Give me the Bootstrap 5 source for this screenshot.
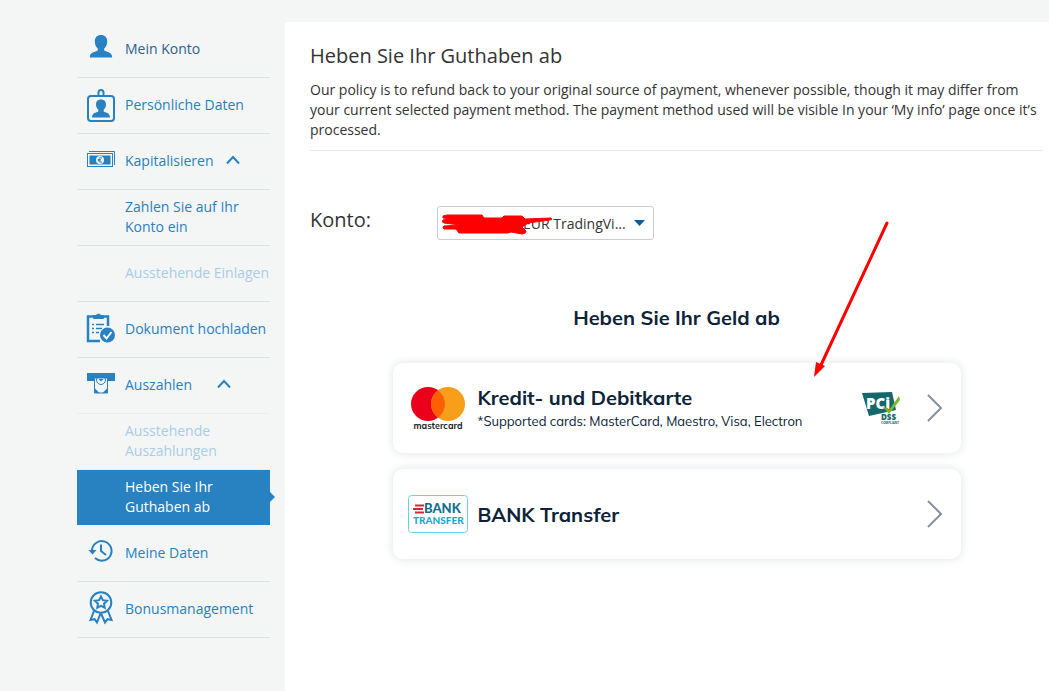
<!DOCTYPE html>
<html lang="de">
<head>
<meta charset="utf-8">
<meta name="viewport" content="width=device-width, initial-scale=1">
<title>Heben Sie Ihr Guthaben ab</title>
<link href="https://cdn.jsdelivr.net/npm/bootstrap@5.3.0/dist/css/bootstrap.min.css" rel="stylesheet">
<style>
  body { background: #f4f6f6; color: #333; font-family: "Open Sans", "Noto Sans", sans-serif; font-size: 14px; line-height: 20px; }
  .page { padding-top: 22px; }
  .side { width: 193px; margin-left: 77px; margin-right: 15px; }
  .side-link { height: 56px; border-bottom: 1px solid #dce3e3; color: #2881c1; text-decoration: none; padding-bottom: 2px; }
  .side-link svg { flex: none; width: 48px; height: 36px; margin-bottom: 2px; fill: #2881c1; }
  .side-link.top-item { color: #2f5f8c; }
  .side-link.sub-item { padding-left: 48px; }
  .side-link.muted-item { color: #a9cce6; }
  .side-link.faint-line { border-color: #e9eeee; }
  .side-link.current { background: #2881c1; background-clip: padding-box; color: #fff; border-color: #f4f6f6; position: relative; }
  .side-link.current::after { content: ""; position: absolute; left: 100%; top: 22px; border: 5px solid transparent; border-left-color: #2881c1; border-right: 0; }
  .side-link svg.caret-up { width: 14px; height: 10px; fill: none; stroke: #2881c1; stroke-width: 2; }
  .caret-near { margin-left: 12px; }
  .caret-far { margin-left: 25px; }
  .panel { padding: 24px 6px 24px 25px; }
  h1 { font-size: 20px; line-height: 20px; font-weight: 400; margin-bottom: 14px; }
  .intro { padding-bottom: 10px; border-bottom: 1px solid #eaeaea; margin-bottom: 55px; }
  .konto-label { font-size: 20px; line-height: 24px; width: 127px; padding-bottom: 6px; }
  .konto-box { position: relative; width: 217px; }
  .konto-select { width: 100%; height: 34px; border: 1px solid #ccc; border-radius: 3px; color: #333; background: #fff; padding: 2px 20px 0 85px; appearance: none; }
  .konto-box svg { position: absolute; left: 0; top: 0; pointer-events: none; }
  .methods { max-width: 568px; color: #0c2338; font-family: Mulish, Muli, "Open Sans", sans-serif; }
  .methods-title, .method-name { font-size: 20px; line-height: 24px; font-weight: 700; }
  .methods-title { margin: 66px 0 33px; }
  .method { height: 90px; border: 0; border-radius: 10px; background: #fff; box-shadow: 0 0 10px rgba(30,50,70,.14); padding: 0 18px 0 15px; color: inherit; }
  .method-logo { flex: none; width: 60px; }
  .method-text { padding: 2px 0 0 10px; }
  .method-note { font-size: 13px; line-height: 22px; }
  .pointer-arrow { position: absolute; right: 70px; top: -144px; pointer-events: none; }
</style>
</head>
<body>
<div class="page d-flex min-vh-100 flex-nowrap">
  <nav class="side flex-shrink-0" aria-label="Konto">
    <a href="#" class="side-link top-item d-flex align-items-center">
      <svg viewBox="0 0 48 36"><path d="M24 5c4 0 6.200 2.700 6.200 6.400 0 3.300-1.300 5.400-3 7v2.200c2.600 1.600 8 1.500 8 6.900H12.800c0-5.400 5.400-5.300 8-6.900v-2.200c-1.700-1.600-3-3.700-3-7C17.800 7.700 20 5 24 5z"/></svg>
      <span>Mein Konto</span></a>
    <a href="#" class="side-link d-flex align-items-center">
      <svg viewBox="0 0 48 36"><rect x="11" y="10" width="26" height="25" rx="3" fill="none" stroke="#2881c1" stroke-width="2"/><path d="M21.500 10V6.500a2.500 2.500 0 0 1 5 0V10" fill="none" stroke="#2881c1" stroke-width="2"/><path d="M24 13.500c3.500 0 5 2.200 5 5 0 2.400-1 4-2.300 5v2c2 1.300 6.300 1 6.300 6H15c0-5 4.300-4.700 6.300-6v-2c-1.300-1-2.300-2.600-2.300-5 0-2.800 1.500-5 5-5z"/></svg>
      <span>Persönliche Daten</span></a>
    <a href="#" class="side-link d-flex align-items-center" aria-expanded="true">
      <svg viewBox="0 0 48 36"><path d="M12 9.500h25.500V23" fill="none" stroke="#2881c1"/><rect x="10.500" y="11.500" width="25" height="13" fill="none" stroke="#2881c1"/><path d="M12.500 13.500h21v9h-21z"/><circle cx="23" cy="18" r="4" fill="#f4f6f6"/><path d="M25 16a2.300 2.300 0 1 0 0 4M20.800 17.500h3M20.800 18.800h3" fill="none" stroke="#2881c1"/></svg>
      <span>Kapitalisieren</span>
      <svg class="caret-up caret-near" viewBox="0 0 14 10"><path d="M1 8.500 7 2l6 6.500"/></svg></a>
    <a href="#" class="side-link sub-item d-flex align-items-center"><span>Zahlen Sie auf Ihr Konto ein</span></a>
    <a href="#" class="side-link sub-item muted-item d-flex align-items-center"><span class="text-nowrap">Ausstehende Einlagen</span></a>
    <a href="#" class="side-link d-flex align-items-center">
      <svg viewBox="0 0 48 36"><path d="M23 31H11V6.500h20V16" fill="none" stroke="#2881c1" stroke-width="2.500"/><path d="M16.500 8.500V5.500h2.500C19.500 3.700 23.500 3.700 24 5.500h2.500v3z" stroke="#2881c1"/><path d="M15 14.500h2m2 0h8M15 18.500h2m2 0h6M15 22.500h2m2 0h3" stroke="#2881c1" stroke-width="1.500"/><circle cx="30.500" cy="25" r="7.500"/><path d="m26.500 25 3 3.500 5-6.500" fill="none" stroke="#f4f6f6" stroke-width="2"/></svg>
      <span class="text-nowrap">Dokument hochladen</span></a>
    <a href="#" class="side-link faint-line d-flex align-items-center" aria-expanded="true">
      <svg viewBox="0 0 48 36"><path d="M10 7h28v8H10z"/><path d="M17.500 12h13v15h-13z" fill="#f4f6f6" stroke="#2881c1"/><circle cx="24" cy="14" r="4.500" fill="none" stroke="#2881c1"/><path d="m21.500 13 2.500 2.500 2.500-2.500M17.500 22l5 5h-5zm13 0-5 5h5z" fill="#2881c1"/></svg>
      <span>Auszahlen</span>
      <svg class="caret-up caret-far" viewBox="0 0 14 10"><path d="M1 8.500 7 2l6 6.500"/></svg></a>
    <a href="#" class="side-link sub-item muted-item faint-line d-flex align-items-center"><span>Ausstehende Auszahlungen</span></a>
    <a href="#" class="side-link sub-item current d-flex align-items-center" aria-current="page"><span>Heben Sie Ihr<br>Guthaben ab</span></a>
    <a href="#" class="side-link d-flex align-items-center">
      <svg viewBox="0 0 48 36"><path d="M15 16A9.800 9.800 0 1 1 18 24M24 10.500V17l5 4" fill="none" stroke="#2881c1" stroke-width="2"/><path d="M11.500 16h8l-4 4.500z"/></svg>
      <span>Meine Daten</span></a>
    <a href="#" class="side-link d-flex align-items-center">
      <svg viewBox="0 0 48 36"><g fill="none" stroke="#2881c1" stroke-width="2"><circle cx="24" cy="12.500" r="10.300"/><path d="m24 6.500 1.900 3.700 4.100.6-3 2.900.7 4.100-3.700-1.900-3.700 1.900.7-4.100-3-2.900 4.100-.6z"/><path d="m17 21-3.500 9 4-.8 2.500 3.300 3.500-9M31 21l3.500 9-4-.8-2.500 3.300-4-9"/></g></svg>
      <span>Bonusmanagement</span></a>
  </nav>

  <main class="panel bg-white flex-grow-1">
    <h1>Heben Sie Ihr Guthaben ab</h1>
    <p class="intro">Our policy is to refund back to your original source of payment, whenever possible, though it may differ from your current selected payment method. The payment method used will be visible In your ‘My info’ page once it’s processed.</p>
    <div class="d-flex align-items-center">
      <label class="konto-label" for="konto">Konto:</label>
      <div class="konto-box">
        <select id="konto" class="konto-select"><option>EUR TradingVi...</option></select>
        <svg width="217" height="34" viewBox="0 0 217 34"><path d="M197 14h11l-5.500 6z" fill="#0b5c9c"/><path d="M6 10 10 9h35l2 3h18l2-2h18l3 3 26-1q2 2-1 2l-22 3-6 4 4 4q1 2-4 3l-11-2-3 1H22l-3-4H7q-2-2 0-3l16-1-16-2q-3-1-1-3l7-1-7-1z" fill="red" stroke="red" stroke-linejoin="round"/></svg>
      </div>
    </div>

    <section class="methods mx-auto">
      <h2 class="methods-title text-center">Heben Sie Ihr Geld ab</h2>
      <div class="position-relative d-grid gap-3">
        <button type="button" class="method d-flex align-items-center text-start w-100">
          <svg class="method-logo" height="48" viewBox="0 0 60 48"><circle cx="20" cy="20" r="17" fill="#eb001b"/><circle cx="40" cy="20" r="17" fill="#f79e1b"/><path d="M30 6.300a17 17 0 0 1 0 27.400 17 17 0 0 1 0-27.400z" fill="#ff5f00"/><text x="30" y="45" text-anchor="middle" font-family="Mulish, Lato" font-weight="700" font-size="9" fill="#222">mastercard</text></svg>
          <span class="method-text flex-grow-1">
            <span class="method-name d-block">Kredit- und Debitkarte</span>
            <span class="method-note d-block">*Supported cards: MasterCard, Maestro, Visa, Electron</span>
          </span>
          <svg width="40" height="34" viewBox="0 0 40 34" role="img" aria-label="PCI DSS Compliant"><path d="M0 2 30 1l4 18L7 25z" fill="#14676b"/><text x="4" y="18" font-family="Open Sans" font-weight="800" font-size="15" fill="#fff">PCi</text><path d="m21 16 5 1 1 2L37 5l1 4-11 14z" fill="#76b82a"/><text x="19" y="29" font-family="Open Sans" font-weight="800" font-size="8" fill="#14676b">DSS</text><text x="19" y="33" font-family="Open Sans" font-weight="700" font-size="3" fill="#14676b">COMPLIANT</text></svg>
          <svg class="ms-4" width="17" height="30" viewBox="0 0 17 30"><path d="m2 2 13 13L2 28" fill="none" stroke="#86919c" stroke-width="2"/></svg>
        </button>
        <button type="button" class="method d-flex align-items-center text-start w-100">
          <svg class="method-logo" height="38" viewBox="0 0 60 38"><rect x=".5" y=".5" width="59" height="37" rx="3" fill="#fff" stroke="#6dcfe6"/><path d="M7 10.500h9M5 14h10M7 17.500h9" stroke="#d9262e" stroke-width="2"/><text x="16" y="18" font-family="Lato" font-weight="900" font-size="13" fill="#12708f">BANK</text><text x="5" y="29" font-family="Lato" font-weight="900" font-size="10" fill="#16a9d4">TRANSFER</text></svg>
          <span class="method-text method-name flex-grow-1">BANK Transfer</span>
          <svg class="ms-4" width="17" height="30" viewBox="0 0 17 30"><path d="m2 2 13 13L2 28" fill="none" stroke="#86919c" stroke-width="2"/></svg>
        </button>
        <svg class="pointer-arrow" width="80" height="160" viewBox="0 0 80 160"><path d="M76 4 10 146" stroke="red" stroke-width="3" stroke-linecap="round"/><path d="M3 158 5 143l9 4z" fill="red"/></svg>
      </div>
    </section>
  </main>
</div>
<script src="https://cdn.jsdelivr.net/npm/bootstrap@5.3.0/dist/js/bootstrap.bundle.min.js"></script>
</body>
</html>
